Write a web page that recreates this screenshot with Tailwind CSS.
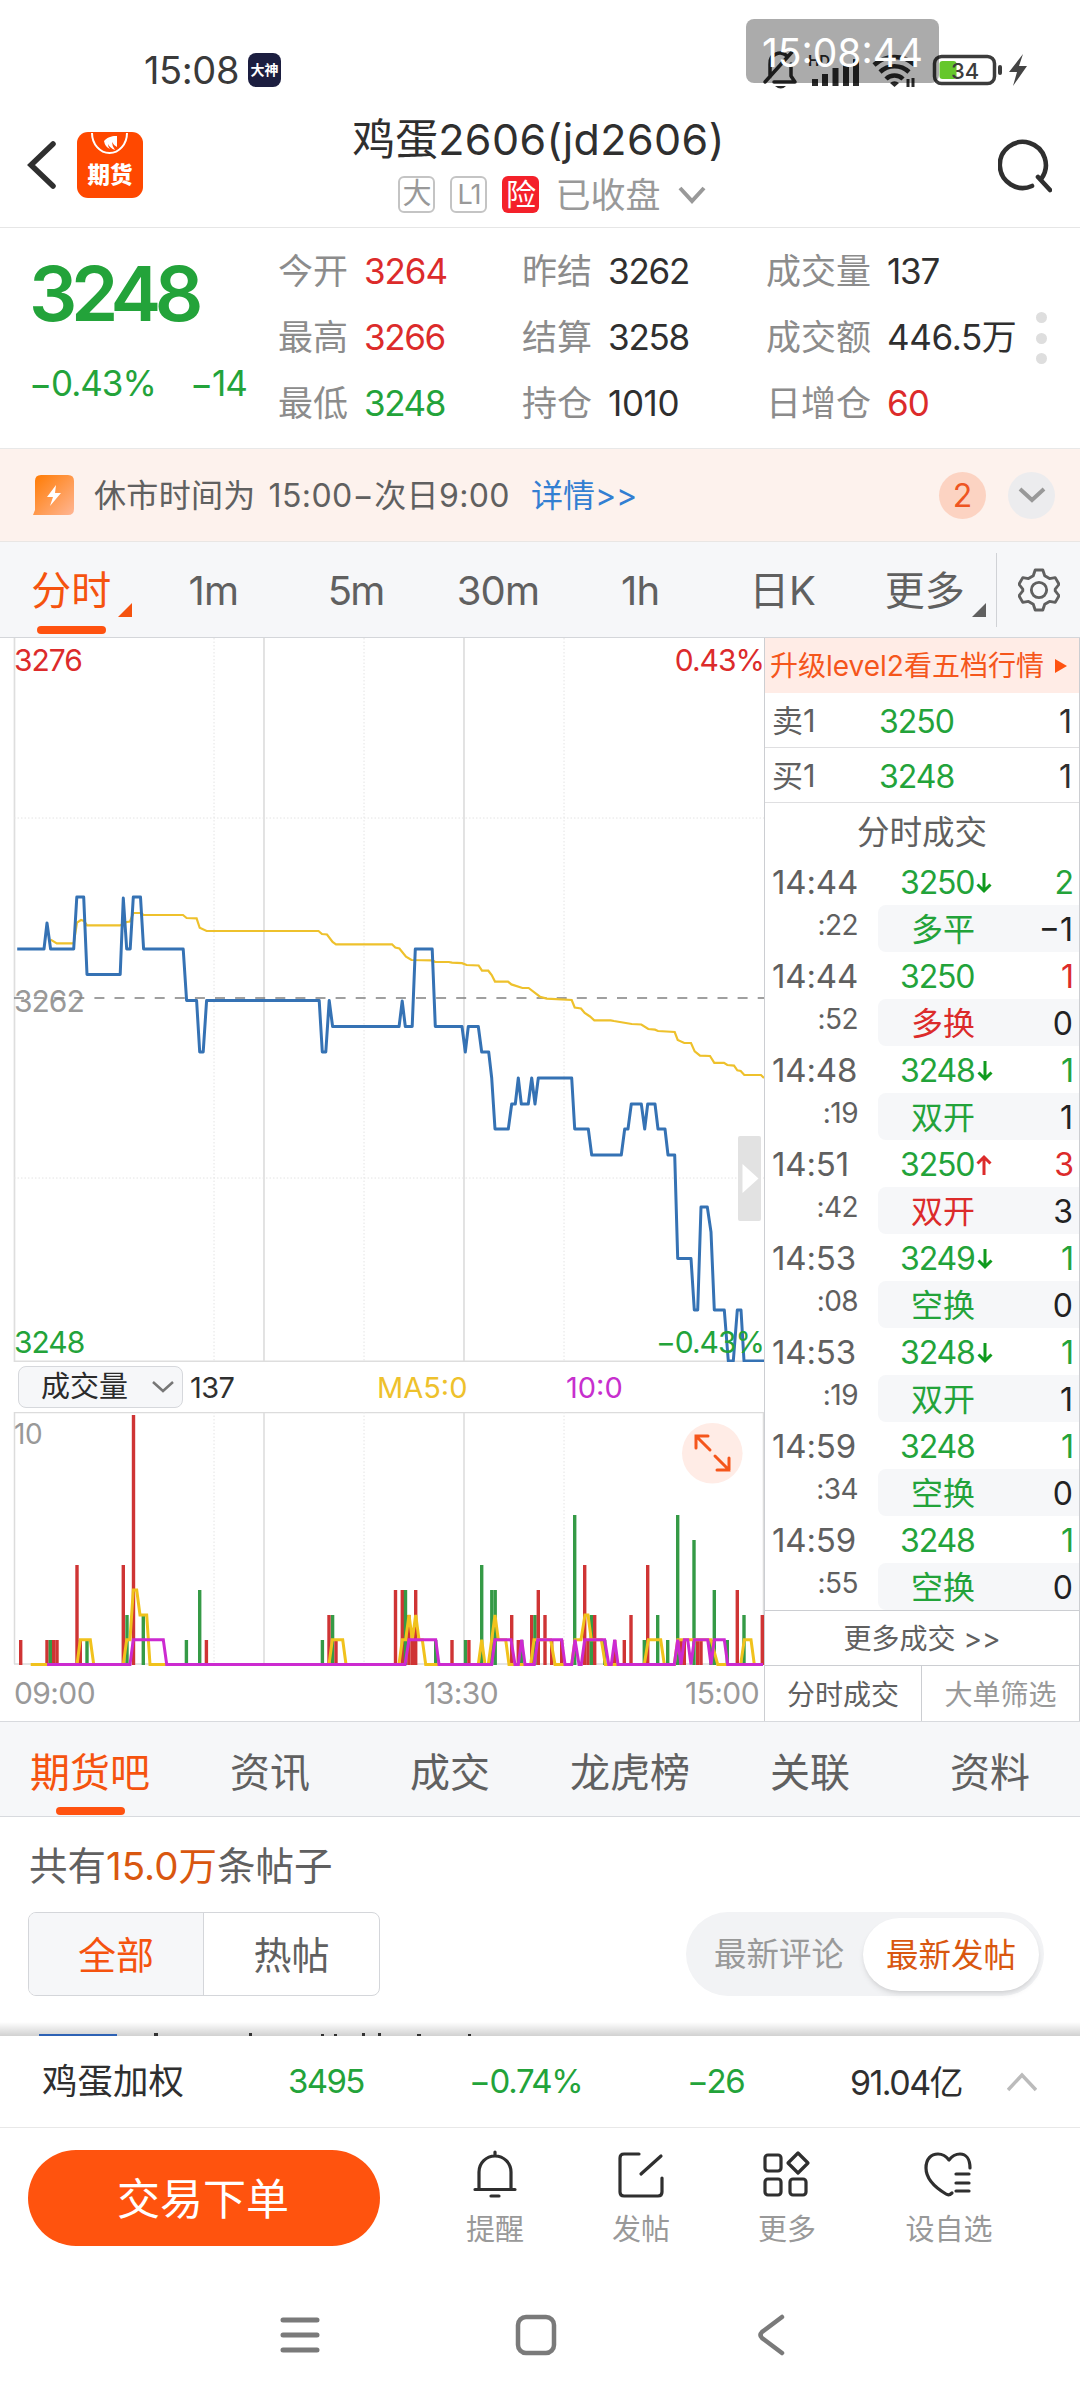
<!DOCTYPE html>
<html lang="zh-CN">
  <head>
    <meta charset="UTF-8" />
    <meta name="viewport" content="width=device-width, initial-scale=1.0" />
    <title>鸡蛋2606(jd2606)</title>
    <script src="https://cdn.jsdelivr.net/npm/@tailwindcss/browser@4"></script>
    <style>
      body {
        font-family: "Inter", "Noto Sans CJK SC", sans-serif;
      }
    </style>
  </head>
  <body class="w-[1080px] h-[2400px] bg-white text-[#2f2f2f] overflow-hidden flex flex-col whitespace-nowrap">
    <!-- Status bar -->
    <div class="relative h-[110px] shrink-0 flex items-start pt-[48px] pl-[144px]">
      <span class="text-[38px] leading-[45px] w-[104px] tracking-[-0.01em] text-[#3a3a3a]">15:08</span>
      <span class="mt-[5px] w-[33px] h-[34px] rounded-lg bg-[#1c1e40] text-white text-[14px] font-bold leading-[34px] text-center">大神</span>
      <svg class="absolute left-[760px] top-[48px]" width="280" height="44" viewBox="760 48 280 44" fill="none">
        <g stroke="#2b2b2b" stroke-width="3.500" stroke-linecap="round" stroke-linejoin="round">
          <path d="M765 82l27-30M770 77V64a10 10 0 0 1 17-8M774 82h21l-4-6V64" />
        </g>
        <path d="M775 86h11q-5 5-11 0z" fill="#2b2b2b" />
        <text x="808" y="66" font-size="15" font-weight="600" fill="#2b2b2b">HD</text>
        <g stroke="#2b2b2b" stroke-width="6">
          <path d="M815 79v7M825 74v12M835.500 68v18M846 64v22M856 59v27" />
        </g>
        <g stroke="#2b2b2b" stroke-width="4.500">
          <path d="M874 65a30 30 0 0 1 41 0M880 72a21 21 0 0 1 29 0M886 79a12 12 0 0 1 17 0" />
        </g>
        <path d="M890 83a7 7 0 0 1 9 0l-4.500 4z" fill="#2b2b2b" />
        <path d="M908 79v8m5-9v9" stroke="#2b2b2b" stroke-width="3" />
        <rect x="934.500" y="56.500" width="60" height="27" rx="7" stroke="#3c3c3c" stroke-width="3.500" />
        <rect x="939.500" y="61" width="17" height="18" rx="3" fill="#66c72c" />
        <rect x="998" y="65" width="4" height="10" rx="2" fill="#3c3c3c" />
        <text x="951" y="78.500" font-size="22" font-weight="500" fill="#3c3c3c">34</text>
        <path d="M1023 54l-14 18h8l-4 14 14-20h-8z" fill="#444" />
      </svg>
      <div class="absolute left-[746px] top-[19px] w-[193px] h-[64px] rounded-lg bg-black/33 text-white text-[39px] leading-[67px] text-center">15:08:44</div>
    </div>

    <!-- Title bar -->
    <header class="h-[118px] shrink-0 border-b border-[#e6e6e6] flex items-center justify-between pl-[25px] pr-[28px]">
      <div class="flex items-center gap-[20px] -mt-[8px] w-[160px]">
        <svg width="32" height="50" viewBox="0 0 32 50" fill="none" stroke="#2f2f2f" stroke-width="5.500" stroke-linecap="round" stroke-linejoin="miter">
          <path d="M28 4L6 25l22 21" />
        </svg>
        <svg width="66" height="66" viewBox="0 0 66 66">
          <rect width="66" height="66" rx="11" fill="#ff4800" />
          <path d="M15 1a17.500 20 0 0 0 35 0" fill="none" stroke="#fff" stroke-width="2" />
          <path d="M27 9c5-5 9-5 13-5v11q-3-1-5-5 0 4 3 8-5-2-7-6 0 3 2 5-5-2-6-8z" fill="#fff" />
          <text x="33" y="51" text-anchor="middle" font-size="22.500" font-weight="900" fill="#fff">期货</text>
        </svg>
      </div>
      <div class="flex flex-col items-center w-[600px]">
        <h1 class="text-[43px] leading-[54px] -mt-[8px]">鸡蛋<span class="tracking-[0.01em]">2606(jd2606)</span></h1>
        <div class="flex items-center mt-[6px] text-[#999] pl-[27px] h-[46px]">
          <span class="w-[37px] h-[37px] rounded-md border-2 border-[#c4c4c4] text-[29px] leading-[32px] text-center">大</span>
          <span class="w-[37px] h-[37px] ml-[15px] rounded-md border-2 border-[#c4c4c4] text-[27px] leading-[33px] text-center tracking-[-0.04em]">L1</span>
          <span class="w-[37px] h-[37px] ml-[15px] rounded-md bg-[#f4212a] text-white text-[30px] leading-[36px] text-center">险</span>
          <span class="ml-[16px] text-[35px] leading-[46px]">已收盘</span>
          <svg class="ml-[17px]" width="28" height="20" viewBox="0 0 28 20" fill="none" stroke="#999" stroke-width="4">
            <path d="M2 3l12 13L26 3" />
          </svg>
        </div>
      </div>
      <div class="w-[160px] flex justify-end">
        <svg width="54" height="54" viewBox="0 0 54 54" fill="none" stroke="#2f2f2f" stroke-width="4.600" stroke-linecap="round" class="-mt-[6px]">
          <path d="M34 47a23 23 0 1 1 9-7" />
          <path d="M40 38l12 13" />
        </svg>
      </div>
    </header>

    <!-- Quote summary -->
    <section class="relative h-[221px] shrink-0 border-b border-[#e8e8e8] flex">
      <div class="w-[278px] pl-[29px] text-[#23a33a]">
        <div class="mt-[18px] text-[76px] leading-[94px] font-semibold tracking-[-0.085em]">3248</div>
        <div class="flex mt-[21px] text-[35px] leading-[44px] tracking-[-0.03em]">
          <span class="w-[161px]">−0.43%</span><span>−14</span>
        </div>
      </div>
      <div class="grid grid-cols-[86px_158px_86px_158px_121px_150px] auto-rows-[66px] content-start pt-[10px] items-center text-[35px] leading-[50px]">
        <span class="text-[#8c8c8c]">今开</span><span class="text-[#dc2b2b] tracking-[-0.03em]">3264</span>
        <span class="text-[#8c8c8c]">昨结</span><span class="tracking-[-0.035em]">3262</span>
        <span class="text-[#8c8c8c]">成交量</span><span class="tracking-[-0.035em]">137</span>
        <span class="text-[#8c8c8c]">最高</span><span class="text-[#dc2b2b] tracking-[-0.04em]">3266</span>
        <span class="text-[#8c8c8c]">结算</span><span class="tracking-[-0.035em]">3258</span>
        <span class="text-[#8c8c8c]">成交额</span><span class="tracking-[-0.01em]">446.5万</span>
        <span class="text-[#8c8c8c]">最低</span><span class="text-[#23a33a] tracking-[-0.04em]">3248</span>
        <span class="text-[#8c8c8c]">持仓</span><span class="tracking-[-0.01em]">1010</span>
        <span class="text-[#8c8c8c]">日增仓</span><span class="text-[#dc2b2b] tracking-[-0.03em]">60</span>
      </div>
      <div class="absolute right-[33px] top-[84px] flex flex-col gap-[9.500px]">
        <i class="w-[11px] h-[11px] rounded-full bg-[#dedede]"></i>
        <i class="w-[11px] h-[11px] rounded-full bg-[#dedede]"></i>
        <i class="w-[11px] h-[11px] rounded-full bg-[#dedede]"></i>
      </div>
    </section>

    <!-- Notice -->
    <section class="h-[93px] shrink-0 bg-[#fdf2ed] border-b border-[#e9e6e4] flex items-center pl-[33px] pr-[25px] text-[32px] text-[#606060]">
      <svg width="41" height="40" viewBox="0 0 41 40">
        <defs>
          <linearGradient id="bolt" x1="0" y1="0" x2="1" y2="1">
            <stop offset="0" stop-color="#ff7a00" />
            <stop offset="1" stop-color="#ffb694" />
          </linearGradient>
        </defs>
        <path d="M8 0h27q6 0 6 6v28q0 6-6 6H0l2-5V6q0-6 6-6z" fill="url(#bolt)" />
        <path d="M23 10l-9 12h6l-3 9 11-13h-6z" fill="#fff" />
      </svg>
      <span class="ml-[20px] pt-[2px] tracking-[0.01em]">休市时间为</span>
      <span class="ml-[13px] pt-[2px] tracking-[0.012em]">15:00−次日9:00</span>
      <span class="ml-[21px] pt-[2px] text-[#337fd2]">详情&gt;&gt;</span>
      <span class="ml-auto w-[47px] h-[47px] rounded-full bg-[#fcd3c2] text-[#ee5522] leading-[47px] text-center">2</span>
      <span class="ml-[22px] w-[47px] h-[47px] rounded-full bg-[#ececee] flex items-center justify-center">
        <svg width="28" height="18" viewBox="0 0 28 18" fill="none" stroke="#999" stroke-width="4"><path d="M2 3l12 11L26 3" /></svg>
      </span>
    </section>

    <!-- Period tabs -->
    <nav class="relative h-[96px] shrink-0 bg-[#f6f7f9] border-b border-[#d4d6da] flex items-center text-[40px] text-[#606060]">
      <div class="grid grid-cols-7 w-[996px] pt-[2px] text-center">
        <span class="relative text-[#f5530f]">分时
          <i class="absolute right-[10px] bottom-[4px] border-l-[14px] border-l-transparent border-b-[14px] border-b-[#f5530f]"></i>
        </span>
        <span class="tracking-[-0.02em]">1m</span>
        <span class="tracking-[-0.04em]">5m</span>
        <span class="tracking-[-0.02em]">30m</span>
        <span class="tracking-[-0.02em]">1h</span>
        <span>日K</span>
        <span class="relative">更多
          <i class="absolute right-[10px] bottom-[4px] border-l-[14px] border-l-transparent border-b-[14px] border-b-[#606060]"></i>
        </span>
      </div>
      <i class="absolute left-[37px] bottom-[3px] w-[69px] h-[8px] rounded-full bg-[#ff5210]"></i>
      <div class="w-[84px] h-[74px] border-l border-[#d0d2d6] flex items-center justify-center">
        <svg width="42" height="44" viewBox="0 0 44 46" fill="none" stroke="#606060" stroke-width="3" stroke-linejoin="round">
          <path d="M18 2h8l2 6 5 3 6-1 4 7-4 5v2l4 5-4 7-6-1-5 3-2 6h-8l-2-6-5-3-6 1-4-7 4-5v-2l-4-5 4-7 6 1 5-3z" />
          <circle cx="22" cy="23" r="8" />
        </svg>
      </div>
    </nav>

    <!-- Charts and tape -->
    <main class="h-[1083px] shrink-0 flex">
      <div class="w-[764px] flex flex-col">
        <div class="relative h-[724px]">
          <svg class="block" width="764" height="724" viewBox="0 638 764 724" fill="none">
            <g stroke="#dedede" stroke-width="1.700">
              <path d="M14.500 638V1362M264 638V1362M464 638V1362M14 1361.300H764" />
            </g>
            <g stroke="#e4e4e4" stroke-dasharray="1.500 2">
              <path d="M214 638V1362M364 638V1362M564 638V1362M14 818H764M14 1178H764" />
            </g>
            <g font-size="30" letter-spacing="-1">
              <text x="14" y="671" fill="#dc2b2b">3276</text>
              <text x="764" y="671" fill="#dc2b2b" text-anchor="end">0.43%</text>
              <text x="14" y="1012" fill="#999">3262</text>
              <text x="14" y="1353" fill="#23a33a">3248</text>
            </g>
            <path d="M14 998H764" stroke="#808080" stroke-width="1.700" stroke-dasharray="10 10.100" />
            <polyline stroke="#eec12c" stroke-width="2.200" points="50.600,939.600 56.800,943.400 73.700,943.400 77,922.600 81,920 84,921 87,925.400 120,925.400 126.700,922 130,921.500 133.300,913 140.500,913 143.600,915 183,915 186.600,918 196.600,918.300 199.700,927.800 206.600,931 318.500,931 322,934 327,934.500 332.600,942 336,944.300 392,944.300 395.300,947.600 399.400,948.500 406,956.600 411.500,960 432,960.300 435,961.800 448.700,962 452,962.700 462,963.200 466.600,965 478.600,965.500 482,970.700 488.300,970.700 491.700,975 495,981.600 508,981.600 511.400,984.400 522.400,988 528.600,988 540,996.700 546.700,998.600 571.700,1000 574.700,1007.500 581,1008.500 584.700,1013 590,1016.500 594.300,1020.300 610.700,1020.300 614,1021 631.700,1024 641.300,1024.500 648.300,1029 655,1029.700 658,1031 674.700,1032 677.700,1040 684.300,1043 691,1043 694.700,1051.400 700,1055.700 710,1056 714.300,1062.800 724,1062.800 727.300,1065 734,1065.600 737.300,1070.300 740.700,1071 744.300,1075 761,1075 764,1078" />
            <polyline stroke="#3572b4" stroke-width="3" stroke-linejoin="round" points="17.200,949 44,949 47,923 50.600,949 73.700,949 76.800,897 83.700,897 87,974.500 120.200,974.500 123.300,898 126.700,949 130.200,949 133.300,897 140.500,897 143.600,949 183.200,949 186.600,1000.500 196.600,1000.500 199.700,1052 203.200,1052 206.600,1000.500 319.200,1000.500 322.300,1052 325.800,1052 329.200,1000.500 332.600,1026.500 399.100,1026.500 402.200,1001 405.300,1026.500 412.200,1026.500 415.300,949 432.200,949 435.300,1026.500 462,1026.500 465.300,1052 468.300,1026.500 478.300,1026.500 481.700,1052 488.700,1052 491.700,1078 495,1129 508.300,1129 511.700,1104 515.300,1104 518.300,1078 521.300,1104 528.300,1104 531.700,1078 535,1104 538.300,1078 571.700,1078 574.700,1129 588.300,1129 591.700,1155 621.300,1155 624.700,1129 628,1129 631.300,1104 641.300,1104 644.700,1129 647.700,1104 655,1104 658,1129 665,1129 668,1155 674.700,1155 677.700,1258.500 691,1258.500 694.300,1310 697.700,1310 701,1207 707.300,1207 711,1232 714.300,1310 724.300,1310 728.300,1361 733.300,1361 737.300,1310 741,1310 744,1361 764,1361" />
            <text x="764" y="1353" fill="#23a33a" font-size="30" letter-spacing="-1" text-anchor="end">−0.43%</text>
            <rect x="738" y="1136" width="23" height="85" rx="2" fill="#e2e2e2" />
            <path d="M742.500 1164v29l16-14.500z" fill="#fff" />
          </svg>
        </div>
        <div class="h-[50px] grid grid-cols-[172px_187px_189px_1fr] items-center pl-[18px] text-[29px]">
          <div class="w-[165px] h-[42px] rounded-lg border border-[#d6d8dc] bg-[#f6f7f9] flex items-center pl-[22px] text-[#2b2b2b]">
            成交量
            <svg class="ml-[24px]" width="22" height="14" viewBox="0 0 22 14" fill="none" stroke="#777" stroke-width="2.500"><path d="M1 2l10 9L21 2" /></svg>
          </div>
          <span class="pt-[1px] tracking-[-0.02em]">137</span>
          <span class="pt-[1px] text-[#eec12c]">MA5:0</span>
          <span class="pt-[1px] text-[#c72fce]">10:0</span>
        </div>
        <div class="relative h-[254px]">
          <svg class="block" width="764" height="254" viewBox="0 1412 764 254" fill="none">
            <g stroke="#dcdcdc" stroke-width="1.500">
              <path d="M14 1412.500H764M14.500 1412V1664M264 1412V1664M464 1412V1664M14 1664H764M763.500 1412V1664" />
            </g>
            <g stroke="#e4e4e4" stroke-dasharray="1.500 2">
              <path d="M214 1412V1664M364 1412V1664M564 1412V1664" />
            </g>
            <text x="14" y="1444" font-size="28" letter-spacing="-0.500" fill="#999">10</text>
            <g id="volume"></g>
            <polyline id="ma5" stroke="#f1c21c" stroke-width="3" />
            <polyline id="ma10" stroke="#cc2ad0" stroke-width="3" />
            <circle cx="712.300" cy="1453.300" r="30.300" fill="#ffece6" />
            <path d="M710 1450l-14-14m0 12v-12h12M715 1456l14 14m0-12v12h-12" stroke="#f5561c" stroke-width="3" stroke-linecap="round" />
          </svg>
        </div>
        <div class="flex justify-between items-center h-[55px] pl-[14px] pr-[5px] text-[30px] text-[#999] tracking-[-0.02em]">
          <span>09:00</span><span class="ml-[142px]">13:30</span><span>15:00</span>
        </div>
      </div>

      <aside class="w-[316px] border-x border-[#ccced2] flex flex-col">
        <div class="h-[55px] bg-[#ffece6] flex items-center pt-[1px] pl-[5px] text-[28px] text-[#f5561c]">
          升级<span>level2</span>看五档行情
          <svg class="ml-[11px]" width="12" height="14" viewBox="0 0 12 14"><path d="M0 0v14l12-7z" fill="#ff5210" /></svg>
        </div>
        <div class="h-[55px] border-b border-[#dfdfe1] grid grid-cols-[107px_1fr_auto] items-center pt-[3px] pl-[7px] pr-[7px] text-[32px]">
          <span class="text-[#606060] text-[31px]">卖1</span><span class="text-[#23a33a] tracking-[-0.03em]">3250</span><span>1</span>
        </div>
        <div class="h-[55px] border-b border-[#dfdfe1] grid grid-cols-[107px_1fr_auto] items-center pt-[3px] pl-[7px] pr-[7px] text-[32px]">
          <span class="text-[#606060] text-[31px]">买1</span><span class="text-[#23a33a] tracking-[-0.03em]">3248</span><span>1</span>
        </div>
        <div class="h-[55px] text-center text-[32.500px] leading-[59px] text-[#606060]">分时成交</div>
        <div id="tape" class="h-[752px]"></div>
        <div class="h-[55px] border-t border-[#ccced2] text-center text-[28px] leading-[56px] text-[#606060]">更多成交 &gt;&gt;</div>
        <div class="h-[56px] border-t border-[#ccced2] grid grid-cols-2 text-center text-[28px] leading-[58px] text-[#606060]">
          <span class="border-r border-[#ccced2]">分时成交</span>
          <span class="text-[#999]">大单筛选</span>
        </div>
      </aside>
    </main>

    <!-- Section tabs -->
    <nav class="relative h-[96px] shrink-0 bg-[#f6f7f9] border-y border-[#d8dade] grid grid-cols-6 items-center text-center text-[40px] text-[#606060] pt-[7px]">
      <span class="text-[#f5530f]">期货吧</span>
      <span>资讯</span>
      <span>成交</span>
      <span>龙虎榜</span>
      <span>关联</span>
      <span>资料</span>
      <i class="absolute left-[56px] bottom-[1px] w-[69px] h-[8px] rounded-full bg-[#ff5210]"></i>
    </nav>

    <!-- Posts -->
    <section class="relative h-[219px] shrink-0 overflow-hidden px-[28px]">
      <p class="pt-[21px] pl-[1px] text-[38.500px] leading-[56px] text-[#606060]">共有<span class="text-[#d9570f]">15.0万</span>条帖子</p>
      <div class="mt-[18px] flex justify-between">
        <div class="w-[352px] h-[84px] rounded-lg border border-[#d4d6da] grid grid-cols-2 text-center text-[38px] leading-[84px] overflow-hidden">
          <span class="bg-[#f6f7f9] border-r border-[#d4d6da] text-[#f5530f]">全部</span>
          <span class="text-[#606060]">热帖</span>
        </div>
        <div class="w-[358px] h-[84px] mr-[8px] rounded-full bg-[#f2f3f5] flex items-center pl-[28px] pr-[5px] text-[32.500px] text-[#999]">
          <span class="pt-[2px]">最新评论</span>
          <span class="ml-auto w-[176px] h-[73px] rounded-full bg-white shadow-md text-center leading-[75px] text-[#d9570f]">最新发帖</span>
        </div>
      </div>
      <!-- top edge of the next post, hidden behind the index bar -->
      <div class="absolute left-0 bottom-0 w-full h-[14px] bg-linear-to-b from-transparent to-black/18"></div>
      <svg class="absolute left-0 bottom-0" width="500" height="3" viewBox="0 0 500 3">
        <rect x="39" y="1" width="78" height="2" fill="#2d62b5" />
        <path d="M154 0h4v3h-4zM249 0h3v3h-3zM321 1h3v2h-3zM334 1h3v2h-3zM362 0h3v3h-3zM378 0h3v3h-3zM417 1h4v2h-4zM468 1h3v2h-3z" fill="#333" />
      </svg>
    </section>

    <!-- Index bar -->
    <section class="h-[92px] shrink-0 bg-white border-b border-[#e8e8e8] flex items-center pt-[1px] pl-[42px] text-[35.500px]">
      <span class="w-[246px]">鸡蛋加权</span>
      <span class="w-[181px] text-[33px] text-[#23a33a] tracking-[-0.05em]">3495</span>
      <span class="w-[218px] text-[33px] text-[#23a33a] tracking-[-0.04em]">−0.74%</span>
      <span class="w-[163px] text-[33px] text-[#23a33a] tracking-[-0.04em]">−26</span>
      <span class="w-[157px] text-[34px] tracking-[-0.045em]">91.04亿</span>
      <svg width="30" height="20" viewBox="0 0 30 20" fill="none" stroke="#bbb" stroke-width="3.500"><path d="M1 18L15 3l14 15" /></svg>
    </section>

    <!-- Actions -->
    <footer class="h-[152px] shrink-0 flex pt-[22px] pl-[28px] text-[29px] text-[#999]">
      <button class="w-[352px] h-[96px] rounded-full bg-[#ff530e] text-white text-[43px] pt-[2px] pr-[2px]">交易下单</button>
      <div class="grid grid-cols-[146px_146px_146px_178px] ml-[42px] text-center">
        <div class="flex flex-col items-center">
          <svg width="46" height="50" viewBox="0 0 46 50" fill="none" stroke="#2f2f2f" stroke-width="3.200" stroke-linecap="round">
            <path d="M23 2v4M7 39V22a16 16 0 0 1 32 0v17M3 39.500h40M19 46h8" />
          </svg>
          <span class="mt-[8px] leading-[44px]">提醒</span>
        </div>
        <div class="flex flex-col items-center">
          <svg width="50" height="50" viewBox="0 0 50 50" fill="none" stroke="#2f2f2f" stroke-width="3.200" stroke-linecap="round">
            <path d="M23 4H8q-4 0-4 4v34q0 4 4 4h34q4 0 4-4V28M45 6L25 24" />
          </svg>
          <span class="mt-[8px] leading-[44px]">发帖</span>
        </div>
        <div class="flex flex-col items-center">
          <svg width="50" height="50" viewBox="0 0 50 50" fill="none" stroke="#2f2f2f" stroke-width="3.200" stroke-linejoin="round">
            <rect x="3" y="5" width="16" height="16" rx="3" />
            <rect x="3" y="29" width="16" height="16" rx="3" />
            <rect x="28" y="29" width="16" height="16" rx="3" />
            <path d="M36 3l10 10-10 10-10-10z" />
          </svg>
          <span class="mt-[8px] leading-[44px]">更多</span>
        </div>
        <div class="flex flex-col items-center">
          <svg width="50" height="50" viewBox="0 0 50 50" fill="none" stroke="#2f2f2f" stroke-width="3.200" stroke-linecap="round" stroke-linejoin="round">
            <path d="M46 18C46 9 42 4 36 4c-5 0-8 2-11 6-3-4-6-6-11-6C7 4 2 9 2 18c0 11 10 20 20 26q3 2 6-1M32 24h13M32 33h13M32 41h13" />
          </svg>
          <span class="mt-[8px] leading-[44px]">设自选</span>
        </div>
      </div>
    </footer>

    <!-- System navigation -->
    <div class="h-[110px] shrink-0 flex items-center pl-[280px]">
      <svg width="40" height="40" viewBox="0 0 40 40" stroke="#7a7a7a" stroke-width="5" stroke-linecap="round"><path d="M3 5h34M3 20h34M3 35h34" /></svg>
      <svg class="ml-[195px]" width="42" height="42" viewBox="0 0 42 42" fill="none" stroke="#7a7a7a" stroke-width="4.500"><rect x="3" y="3" width="36" height="36" rx="8" /></svg>
      <svg class="ml-[200px]" width="28" height="42" viewBox="0 0 28 42" fill="none" stroke="#7a7a7a" stroke-width="4.500" stroke-linecap="round"><path d="M25 3L5 18q-3 3 0 6l20 15" /></svg>
    </div>

    <script>
      // x position, lots, direction
      const bars = [
        [20.7, 1, "r"], [47, 1, "r"], [50.3, 1, "g"], [53.7, 1, "r"], [57, 1, "r"], [77, 4, "r"], [80.3, 1, "r"], [87, 1, "g"],
        [123.3, 4, "r"], [127, 2, "g"], [133.5, 10, "r"], [143.3, 2, "g"], [186.4, 1, "g"], [199.7, 3, "g"], [206.4, 1, "r"],
        [322.4, 1, "g"], [329, 2, "r"], [332.6, 2, "g"], [336, 1, "r"], [395.5, 3, "r"], [402.3, 3, "r"], [405.5, 3, "g"],
        [408.9, 2, "r"], [412.3, 1, "r"], [415.7, 3, "r"], [435.7, 1, "g"], [452, 1, "r"], [465.5, 1, "g"], [468.9, 1, "r"],
        [481.7, 4, "g"], [491.8, 3, "g"], [495.2, 3, "g"], [511.7, 2, "r"], [518.3, 1, "r"], [521.7, 1, "g"], [531.7, 2, "r"],
        [535, 2, "g"], [538.3, 3, "r"], [545, 2, "r"], [551.7, 1, "r"], [561.7, 1, "r"], [574.7, 6, "g"], [584.7, 4, "r"],
        [588, 1, "r"], [591.3, 2, "g"], [594.7, 2, "r"], [604.7, 1, "g"], [614.7, 1, "r"], [624.3, 1, "r"], [631, 2, "r"],
        [644.3, 1, "g"], [647.7, 4, "r"], [657.7, 2, "g"], [667.7, 1, "g"], [677.7, 6, "g"], [681, 1, "r"], [684.3, 1, "r"],
        [694, 5, "g"], [697.7, 1, "r"], [701, 1, "r"], [711, 1, "g"], [714.3, 3, "g"], [727.3, 1, "g"], [737.3, 3, "r"],
        [744, 2, "g"], [762.3, 2, "r"],
      ];
      const ma5 = "30.7,0 77,0 80.3,1 90.3,1 93.7,0 123.3,0 126.7,1 130,1 133.3,3 136.7,3 140,2 146.7,2 150,0 329,0 332.3,1 342.7,1 346,0 399,0 402.3,1 405.7,1 409,2 412.3,1 415.7,2 419,1 422.3,1 425.7,0 478.3,0 481.7,1 485,0 488.3,0 491.7,1 495,2 498.3,1 505.7,1 509,0 530.7,0 534,1 550.7,1 555,0 571.7,0 575,1 581,1 585,2 588,2 591.3,1 601.3,1 605.3,0 644.3,0 648.3,1 660.7,1 664.3,0 674.3,0 677.7,1 711,1 717.7,0 740.7,0 744.3,1 751,1 754.3,0 763,0";
      const ma10 = "47,0 130,0 133.3,1 163.3,1 166.7,0 405,0 409,1 435.7,1 439,0 491.7,0 495,1 511,1 515,0 518.3,0 521.7,1 525,0 534.3,0 537.7,1 561.7,1 565,0 571.7,0 575,1 579,0 581.3,0 584.7,1 604.7,1 608.7,0 611.3,0 614.7,1 618,0 674.3,0 677.7,1 681,0 684.3,1 687.7,1 691,0 694.3,1 707.7,1 711,0 714.3,1 724.3,1 727.7,0 763,0";
      const toPoints = (s) =>
        s.split(" ").map((p) => {
          const [x, v] = p.split(",");
          return `${x},${1664.5 - v * 24.8}`;
        }).join(" ");

      document.getElementById("volume").innerHTML = bars
        .map(([x, v, d]) => `<rect x="${x - 1.7}" y="${1665 - v * 25}" width="3.4" height="${v * 25}" fill="${d === "r" ? "#cf3434" : "#359a46"}" />`)
        .join("");
      document.getElementById("ma5").setAttribute("points", toPoints(ma5));
      document.getElementById("ma10").setAttribute("points", toPoints(ma10));

      const green = "text-[#23a33a]";
      const red = "text-[#dc2b2b]";
      // time, seconds, price, arrow, lots, lots colour, kind, kind colour, open interest change
      const trades = [
        ["14:44", ":22", 3250, "down", 2, green, "多平", green, "−1"],
        ["14:44", ":52", 3250, "", 1, red, "多换", red, "0"],
        ["14:48", ":19", 3248, "down", 1, green, "双开", green, "1"],
        ["14:51", ":42", 3250, "up", 3, red, "双开", red, "3"],
        ["14:53", ":08", 3249, "down", 1, green, "空换", green, "0"],
        ["14:53", ":19", 3248, "down", 1, green, "双开", green, "1"],
        ["14:59", ":34", 3248, "", 1, green, "空换", green, "0"],
        ["14:59", ":55", 3248, "", 1, green, "空换", green, "0"],
      ];
      const arrows = {
        down: '<svg width="16" height="22" viewBox="0 0 16 22" fill="none" stroke="#0f9a1e" stroke-width="3"><path d="M8 1v18M1.500 12.500L8 19l6.500-6.500" /></svg>',
        up: '<svg width="16" height="22" viewBox="0 0 16 22" fill="none" stroke="#dc2b2b" stroke-width="3"><path d="M8 21V3M1.500 9.500L8 3l6.500 6.500" /></svg>',
        "": "",
      };
      document.getElementById("tape").innerHTML = trades
        .map(
          ([t, s, p, a, n, nc, k, kc, oi]) => `
        <div class="h-[94px] grid grid-cols-[113px_1fr] grid-rows-[47px_47px]">
          <div class="pl-[7px] text-[33px] leading-[49px] tracking-[-0.005em] text-[#606060]">${t}</div>
          <div class="flex items-center pt-[2px] pl-[22px] pr-[6px] text-[32px] tracking-[-0.035em] text-[#23a33a]">
            ${p}<span class="ml-[2px]">${arrows[a]}</span><span class="ml-auto ${nc}">${n}</span>
          </div>
          <div class="pr-[20px] text-right text-[28px] leading-[40px] tracking-[-0.02em] text-[#606060]">${s}</div>
          <div class="flex items-center rounded-l-lg bg-[#f6f7f9] pt-[2px] pl-[33px] pr-[6px] text-[32px] ${kc}">
            ${k}<span class="ml-auto text-[#222]">${oi}</span>
          </div>
        </div>`
        )
        .join("");
    </script>
  </body>
</html>
